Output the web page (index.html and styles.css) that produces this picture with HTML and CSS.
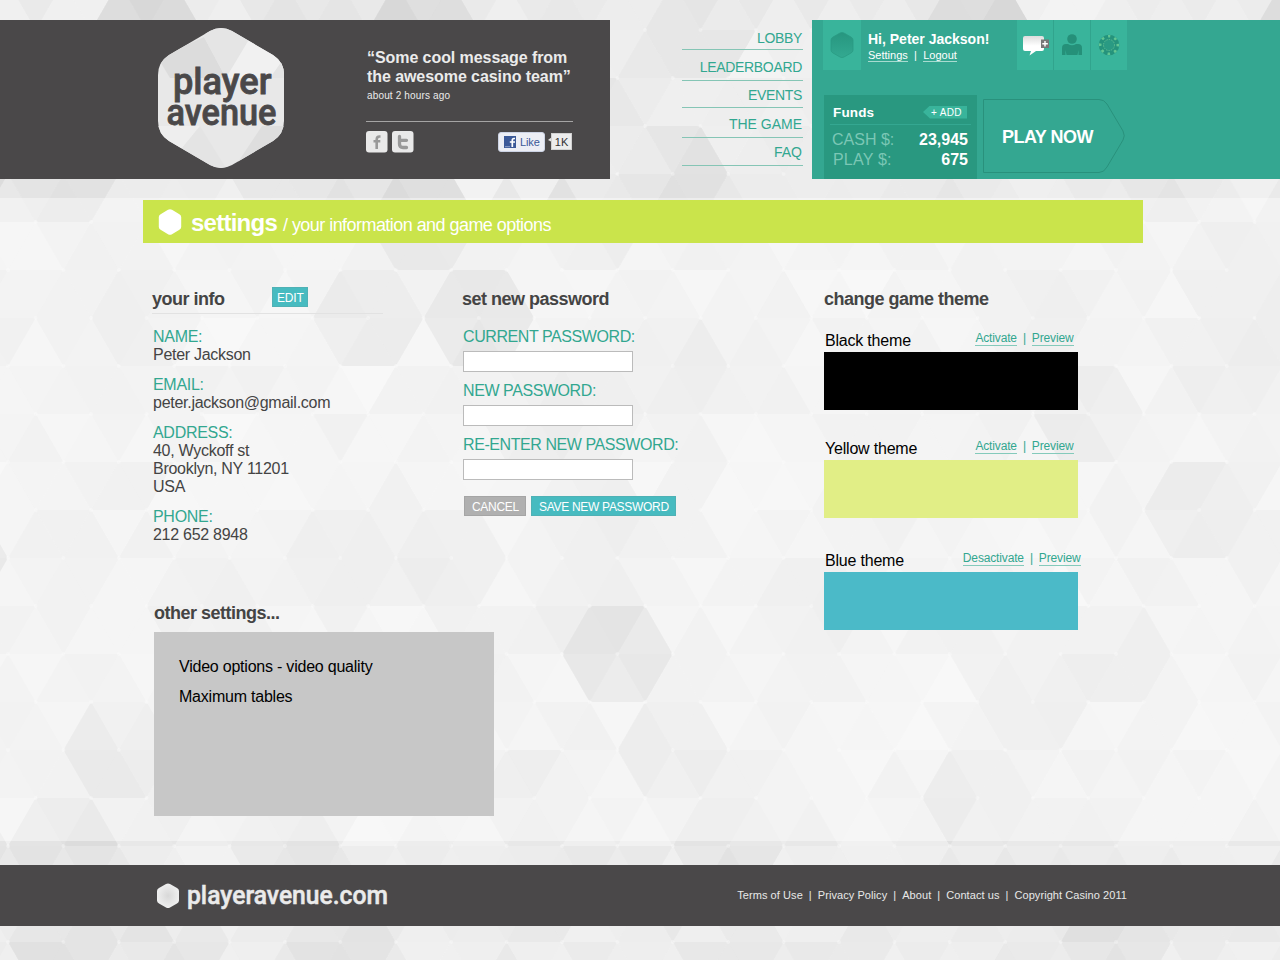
FILE: index.html
```html
<!DOCTYPE html>
<html lang="en">
<head>
<meta charset="utf-8">
<title>Player Avenue - Settings</title>
<link rel="stylesheet" href="styles.css">
</head>
<body>
<svg class="backdrop" width="1280" height="960" aria-hidden="true">
  <defs>
    <path id="hex" d="M-24 -48H24Q28 -48 30 -44L53 -4Q56 0 53 4L30 44Q28 48 24 48H-24Q-28 48 -30 44L-53 4Q-56 0 -53 -4L-30 -44Q-28 -48 -24 -48Z"/>
  </defs>
  <rect width="1280" height="960" fill="#ececec"/>
  <g id="tiles"></g>
  <rect y="198" width="1280" height="643" fill="#fff" opacity=".4"/>
</svg>
<div class="page">
  <header class="header">
    <div class="brand">
      <svg class="logo" width="126" height="140" viewBox="0 0 126 140">
        <defs><clipPath id="logo-shape"><path d="M52 3Q63 -3 74 3L115 27Q126 34 126 47V93Q126 106 115 113L74 137Q63 143 52 137L11 113Q0 106 0 93V47Q0 34 11 27Z"/></clipPath></defs>
        <g clip-path="url(#logo-shape)">
          <rect width="126" height="140" fill="#e8e8e8"/>
          <path d="M46 9L68 50H12L0 30Z" fill="#dcdcdc"/>
          <path d="M46 9L68 50L98 0H50Z" fill="#e5e5e5"/>
          <path d="M98 0L68 50H126V20Z" fill="#f1f1f1"/>
          <path d="M126 30L112 50H126Z" fill="#e4e4e4"/>
          <path d="M0 98H42L20 125L0 110Z" fill="#eeeeee"/>
          <path d="M42 98L68 140H20V125Z" fill="#e4e4e4"/>
          <path d="M104 98L76 140L126 115V98Z" fill="#dedede"/>
        </g>
        <text class="logo-word" x="15" y="66" textLength="98.500" lengthAdjust="spacingAndGlyphs">player</text>
        <text class="logo-word" x="8.500" y="97" textLength="110" lengthAdjust="spacingAndGlyphs">avenue</text>
      </svg>
      <div class="message">
        <p class="quote">“Some cool message from<br>the awesome casino team”</p>
        <p class="ago">about 2 hours ago</p>
        <div class="social">
          <svg width="22" height="22" viewBox="0 0 22 22"><rect width="21.500" height="21.500" rx="3" fill="#e9e9e9"/><path d="M14.500 5.500H13.500Q10.700 5.500 10.700 8.500V18M7.500 10.300H14.300" fill="none" stroke="#999" stroke-width="2.600"/></svg>
          <svg width="22" height="22" viewBox="0 0 22 22"><rect width="21.500" height="21.500" rx="3" fill="#e9e9e9"/><path d="M7.500 5.500V13Q7.500 16.500 11 16.500H14.500M7.500 9.300H14.500" fill="none" stroke="#999" stroke-width="3.300" stroke-linecap="round"/></svg>
          <span class="like"><svg width="12" height="12" viewBox="0 0 12 12"><rect width="12" height="12" fill="#3b5998"/><path d="M11 2.500H10Q8.300 2.500 8.300 4.500V11M5.800 6H11" fill="none" stroke="#fff" stroke-width="1.700"/><path d="M1 10.700H6" stroke="#8fa0c8"/></svg>Like</span>
          <svg class="notch" width="4" height="6" viewBox="0 0 4 6"><path d="M0 3L4 0V5Z" fill="#e5e5e5"/></svg>
          <span class="count">1K</span>
        </div>
      </div>
    </div>
    <nav class="nav"><a>LOBBY</a><a>LEADERBOARD</a><a>EVENTS</a><a>THE GAME</a><a>FAQ</a></nav>
    <div class="account">
      <div class="account-top">
        <div class="avatar"><svg width="24" height="26" viewBox="0 0 24 26"><defs><linearGradient id="av" x2="0" y2="1"><stop stop-color="#27967f"/><stop offset="1" stop-color="#33a991"/></linearGradient></defs><path d="M10 1Q12 0 14 1L21 5Q23 6 23 8V18Q23 20 21 21L14 25Q12 26 10 25L3 21Q1 20 1 18V8Q1 6 3 5Z" fill="url(#av)" stroke="#2a9a83" stroke-width=".8"/></svg></div>
        <div class="greeting">
          <strong>Hi, Peter Jackson!</strong>
          <p><a>Settings</a><span class="bar">|</span><a>Logout</a></p>
        </div>
        <div class="tools">
          <span class="tool"><svg width="28" height="22" viewBox="0 0 28 22"><defs><linearGradient id="bub" x2="0" y2="1"><stop stop-color="#ddd"/><stop offset=".5" stop-color="#fff"/></linearGradient></defs><path d="M4 2H21Q23 2 23 4V15Q23 17 21 17H15L8.500 21.500L10 17H4Q2 17 2 15V4Q2 2 4 2Z" fill="url(#bub)"/><rect x="20" y="5.500" width="8" height="8.500" fill="#777"/><path d="M24 7V12.500M21.300 9.700H26.800" stroke="#fff" stroke-width="1.400"/></svg></span>
          <span class="tool"><svg width="22" height="22" viewBox="0 0 22 22" fill="#259079"><circle cx="11" cy="5" r="4.800"/><path d="M1 21V14Q1 10 5 10H7Q11 12.500 15 10H17Q21 10 21 14V21H17.500V16L16.500 21H5.500L4.500 16V21Z"/></svg></span>
          <span class="tool"><svg width="22" height="22" viewBox="0 0 22 22" fill="none"><circle cx="11" cy="11" r="10.300" fill="#25937c"/><circle cx="11" cy="11" r="8.800" stroke="#62c693" stroke-width="2.600" stroke-dasharray="2.600 4.311" stroke-dashoffset="1.300" transform="rotate(-90 11 11)"/><circle cx="11" cy="11" r="5.500" fill="#2a9a83" stroke="#62bd93" stroke-width=".9" stroke-dasharray="1.500 1"/></svg></span>
        </div>
      </div>
      <div class="account-bottom">
        <div class="funds">
          <div class="funds-head"><strong>Funds</strong><a class="add">+ ADD</a></div>
          <div class="money"><span>CASH $:</span><b>23,945</b></div>
          <div class="money second"><span>PLAY $:</span><b>675</b></div>
        </div>
        <a class="play"><svg width="144" height="76" viewBox="0 0 144 76"><path d="M1.500 1.500H117Q122 1.500 125 6L141 33Q143.500 38 141 42L125 69Q122 74.500 117 74.500H1.500Z" fill="none" stroke="#29917c"/></svg><span>PLAY NOW</span></a>
      </div>
    </div>
  </header>

  <div class="banner">
    <svg width="24" height="26" viewBox="0 0 24 26"><path d="M10 .8Q12 -.2 14 .8L21 5Q23.200 6 23.200 8V18Q23.200 20 21 21L14 25.200Q12 26.200 10 25.200L3 21Q.8 20 .8 18V8Q.8 6 3 5Z" fill="#fff"/></svg>
    <h1>settings</h1><p>/ your information and game options</p>
  </div>

  <main class="main">
    <section class="info">
      <div class="info-head"><h2>your info</h2><a class="btn">EDIT</a></div>
      <dl>
        <dt>NAME:</dt><dd>Peter Jackson</dd>
        <dt>EMAIL:</dt><dd class="email">peter.jackson@gmail.com</dd>
        <dt>ADDRESS:</dt><dd>40, Wyckoff st<br>Brooklyn, NY 11201<br>USA</dd>
        <dt>PHONE:</dt><dd>212 652 8948</dd>
      </dl>
    </section>
    <section class="password">
      <h2>set new password</h2>
      <label>CURRENT PASSWORD:<input type="password"></label>
      <label>NEW PASSWORD:<input type="password"></label>
      <label>RE-ENTER NEW PASSWORD:<input type="password"></label>
      <div class="buttons"><a class="btn cancel">CANCEL</a><a class="btn">SAVE NEW PASSWORD</a></div>
    </section>
    <section class="themes">
      <h2>change game theme</h2>
      <div class="theme black"><div class="theme-head"><h3>Black theme</h3><p><a>Activate</a><span>|</span><a>Preview</a></p></div><div class="swatch"></div></div>
      <div class="theme yellow"><div class="theme-head"><h3>Yellow theme</h3><p><a>Activate</a><span>|</span><a>Preview</a></p></div><div class="swatch"></div></div>
      <div class="theme blue"><div class="theme-head"><h3>Blue theme</h3><p><a>Desactivate</a><span>|</span><a>Preview</a></p></div><div class="swatch"></div></div>
    </section>
    <section class="other">
      <h2>other settings...</h2>
      <div class="panel"><p>Video options - video quality</p><p>Maximum tables</p></div>
    </section>
  </main>

  <footer class="footer">
    <svg class="site-logo" width="240" height="40" viewBox="0 0 240 40"><defs><radialGradient id="fh"><stop stop-color="#d8d8d8"/><stop offset="1" stop-color="#efefef"/></radialGradient></defs><path d="M10 8Q12 7 14 8L21 12Q23 13 23 15V24.500Q23 26.500 21 27.500L14 31.500Q12 32.500 10 31.500L3 27.500Q1 26.500 1 24.500V15Q1 13 3 12Z" fill="url(#fh)"/><text class="site" x="31" y="28" textLength="201" lengthAdjust="spacingAndGlyphs">playeravenue.com</text></svg>
    <p><a>Terms of Use</a><span>|</span><a>Privacy Policy</a><span>|</span><a>About</a><span>|</span><a>Contact us</a><span>|</span><a>Copyright Casino 2011</a></p>
  </footer>
</div>
<script src="backdrop.js"></script>
</body>
</html>
```
FILE: styles.css
```css
* { box-sizing: border-box; }
body { margin: 0; font-family: "Liberation Sans", Arial, sans-serif; color: #444; }
h1, h2, h3, p, dl, dd { margin: 0; }
svg { display: block; flex: none; }
.backdrop { position: absolute; left: 0; top: 0; z-index: -1; }
.page { width: 1280px; height: 960px; padding-top: 20px; overflow: hidden; }

.header { display: flex; height: 159px; }
.brand { width: 610px; background: #4a4849; display: flex; padding: 8px 0 0 158px; }
.logo-word { font: 500 36px Roboto, sans-serif; fill: #4a4849; stroke: #4a4849; stroke-width: .8; }
.message { margin: 20px 0 0 83px; width: 206px; color: #ebebeb; }
.quote { font-weight: bold; font-size: 16px; line-height: 19px; letter-spacing: -.07px; white-space: nowrap; }
.ago { font-size: 10px; letter-spacing: .15px; line-height: 14px; margin-top: 3px; }
.social { display: flex; align-items: center; margin: 18px 0 0 -1px; padding-top: 9px; width: 207px; border-top: 1px solid #a5a4a4; gap: 4px; }
.like { display: flex; align-items: center; gap: 4px; width: 47px; height: 20px; margin: -1px 3px 0 80px; padding-left: 5px; border: 1px solid #ccd3e4; border-radius: 3px; background: #eceef5; color: #3b5998; font-size: 11px; letter-spacing: -.1px; flex: none; }
.notch { margin: -5px -4px 0 -4px; }
.count { width: 21px; height: 17px; margin: -2px 0 0 -1px; background: #ececec; border: 1px solid #d0d0d0; color: #333; font-size: 11px; line-height: 16px; text-align: center; flex: none; }

.nav { width: 121px; margin-left: 72px; }
.nav a { display: flex; align-items: flex-end; justify-content: flex-end; height: 30px; border-bottom: 1px solid #85c5b5; padding: 0 1px 3px 0; font-size: 14px; line-height: 16px; letter-spacing: -.33px; color: #32a790; }
.nav a:nth-child(2) { height: 31px; padding-bottom: 5px; }
.nav a:nth-child(3) { height: 27px; padding-bottom: 4px; }
.nav a:nth-child(4) { padding-bottom: 5px; letter-spacing: 0; }
.nav a:nth-child(5) { height: 28px; padding-bottom: 5px; letter-spacing: 0; }

.account { margin-left: 9px; flex: 1; background: #34a791; color: #fff; padding-left: 11px; }
.account-top { display: flex; height: 75px; }
.avatar { width: 38px; height: 50px; background: #39b49b; display: grid; place-items: center; }
.greeting { width: 149px; margin-left: 7px; padding-top: 11px; white-space: nowrap; }
.greeting strong { display: block; font-size: 14px; line-height: 16px; }
.greeting p { display: flex; font-size: 11px; line-height: 12px; margin-top: 2px; }
.greeting a { border-bottom: 1px solid #a8dbd0; }
.bar { margin: 0 6.300px; }
.tools { display: flex; width: 110px; height: 50px; background: #39b49b; }
.tool { flex: 1; display: grid; place-items: center; }
.tool + .tool { border-left: 1px solid #31a48d; }
.account-bottom { display: flex; height: 84px; padding-left: 1px; }
.funds { width: 153px; background: #299880; padding: 8px 6px 0; }
.funds-head { display: flex; justify-content: space-between; align-items: center; height: 22px; padding: 0 4px 3px 3px; border-bottom: 1px solid #34a791; margin-bottom: 5px; }
.funds-head strong { font-size: 13.5px; letter-spacing: .15px; }
.add { width: 44px; height: 13px; padding-left: 8px; background: #39b49b; clip-path: polygon(7px 0, 100% 0, 100% 100%, 7px 100%, 0 50%); font-size: 10px; line-height: 13px; letter-spacing: .3px; }
.money { display: flex; justify-content: space-between; font-size: 16px; line-height: 20px; padding: 0 3px 0 2px; }
.second { padding-left: 3px; }
.second span { letter-spacing: .2px; }
.money span { color: #7bc7b5; }
.play { position: relative; margin: 3px 0 0 5px; width: 144px; height: 76px; }
.play span { position: absolute; left: 20px; top: 29px; font-weight: bold; font-size: 18px; line-height: 20px; letter-spacing: -.5px; white-space: nowrap; }

.banner { display: flex; align-items: center; width: 1000px; height: 43px; margin: 21px 0 0 143px; padding-left: 15px; background: #cae44b; color: #fff; }
.banner h1 { margin-left: 9px; font-size: 24px; line-height: 28px; letter-spacing: -.75px; padding-top: 3px; }
.banner p { margin-left: 6px; font-size: 18px; line-height: 22px; letter-spacing: -.55px; padding-top: 7px; }

.main { display: grid; grid-template-columns: 310px 362px 300px; grid-template-rows: 314px 260px; margin: 43px 0 0 152px; height: 622px; }
h2 { font-size: 18px; line-height: 22px; letter-spacing: -.5px; padding-top: 2px; }
.info-head { display: flex; height: 28px; width: 231px; border-bottom: 1px solid #e2e2e2; }
.info-head h2 { width: 120px; }
.btn { display: block; height: 20px; padding: 0 4px 0 5px; background: #47bbc0; border: 1px solid #4fb1b5; color: #fff; font-size: 12px; line-height: 20px; letter-spacing: -.2px; }
.info-head .btn { width: 36px; margin-top: 1px; padding-left: 4px; }
dl { margin-top: 14px; padding-left: 1px; font-size: 16px; line-height: 18px; letter-spacing: -.28px; }
dt, label { color: #32a790; letter-spacing: -.3px; }
dd { margin-bottom: 12px; }
.email { letter-spacing: -.27px; }
.password label { display: block; margin-left: 1px; font-size: 16px; line-height: 18px; letter-spacing: -.42px; height: 54px; }
.password h2 { margin-bottom: 18px; }
.password input { display: block; width: 170px; height: 21px; margin-top: 5px; padding: 0; border: 1px solid #bbb; background: #fff; }
.buttons { display: flex; gap: 5px; margin: 6px 0 0 2px; }
.buttons .btn { width: 145px; padding-left: 7px; letter-spacing: -.3px; white-space: nowrap; }
.buttons .cancel { width: 62px; background: #b0b0b0; border-color: #a5a5a5; }
.themes { height: 350px; }
.theme { width: 254px; height: 108px; }
.themes h2 { height: 44px; }
.theme-head { display: flex; justify-content: space-between; height: 22px; }
.theme h3 { font-weight: normal; font-size: 16px; line-height: 21px; letter-spacing: -.2px; color: #000; margin-left: 1px; }
.theme-head p { display: flex; height: 16px; margin-top: 1px; font-size: 12px; line-height: 15px; letter-spacing: -.15px; color: #32a790; margin-right: 4.500px; }
.theme-head p a { height: 15px; border-bottom: 1px solid #84cabb; }
.theme-head span { margin: 0 6px; }
.swatch { height: 58px; background: #000; }
.yellow { height: 112px; }
.yellow .swatch { background: #e1ee86; }
.blue .theme-head p { margin-right: -2.500px; }
.blue .swatch { background: #4bbac8; }
.other { margin-left: 2px; width: 340px; }
.other h2 { height: 32px; letter-spacing: -.5px; }
.panel { height: 184px; background: #c7c7c7; padding: 20px 25px; color: #000; font-size: 16px; line-height: 30px; letter-spacing: -.22px; }

.footer { display: flex; justify-content: space-between; height: 61px; margin-top: -43px; padding: 11px 153px 0 156px; background: #4a4849; color: #e8e8e8; }
.site-logo { overflow: visible; }
.site { font: 500 26px Roboto, sans-serif; fill: #ebebeb; stroke: #ebebeb; stroke-width: .5; }
.footer p { display: flex; font-size: 11px; line-height: 14px; margin-top: 12px; letter-spacing: .07px; }
.footer span { margin: 0 6px; }
```
FILE: backdrop.js
```js
// Triangular lattice: rows 48px apart, vertices 55.4px apart, odd rows shifted by half a step.
const NS = 'http://www.w3.org/2000/svg';
const tiles = document.getElementById('tiles');
const STEP = 55.4, ROW = 48;

function vertex(k, n) {
  return [285 + STEP * n + (k % 2 ? -STEP / 2 : 0), 270 + ROW * k];
}

function add(tag, attrs) {
  const el = document.createElementNS(NS, tag);
  for (const key in attrs) el.setAttribute(key, attrs[key]);
  tiles.appendChild(el);
}

let seed = 77;
function rand() {
  seed = (seed * 16807) % 2147483647;
  return seed / 2147483647;
}

for (let k = -6; k < 15; k++) {
  for (let n = -7; n < 20; n++) {
    const [x, y] = vertex(k, n);
    for (const side of [-1, 1]) {
      const d = side < 0
        ? `M${x} ${y}h${STEP}l${-STEP / 2} ${ROW}z`
        : `M${x} ${y}l${STEP / 2} ${ROW}h${-STEP}z`;
      const shade = rand();
      add('path', { d, fill: shade > .5 ? '#fff' : '#aaa', opacity: (Math.abs(shade - .5) * (shade > .5 ? .5 : .12)).toFixed(3) });
    }
    if (rand() > .82) add('use', { href: '#hex', x, y, fill: rand() > .35 ? '#fff' : '#999', opacity: rand() > .5 ? .2 : .06 });
  }
}

const dark = [
  [368, 318], [146, 318], [616, 222], [588, 414], [690, 350], [571, 511], [1102, 414], [1233, 369],
  [1024, 702], [686, 752], [106, 752], [980, 797], [584, 608], [343, 558], [216, 608], [739, 846],
  [306, 846], [82, 846], [1224, 510], [450, 558], [340, 942], [60, 942], [1090, 942], [30, 80],
  [700, 30], [1150, 190], [50, 190], [690, 170], [340, 190]
];
for (const [px, py] of dark) {
  const k = Math.round((py - 270) / ROW);
  const n = Math.round((px - 285) / STEP + (k % 2 ? .5 : 0));
  const [x, y] = vertex(k, n);
  add('use', { href: '#hex', x, y, fill: '#8c8c8c', opacity: .08 });
}
for (let k = -6; k < 15; k++) {
  for (let n = -6; n < 19; n++) {
    const [cx, cy] = vertex(k, n);
    add('circle', { cx, cy, r: 2, fill: '#fff', opacity: .3 });
  }
}
```
